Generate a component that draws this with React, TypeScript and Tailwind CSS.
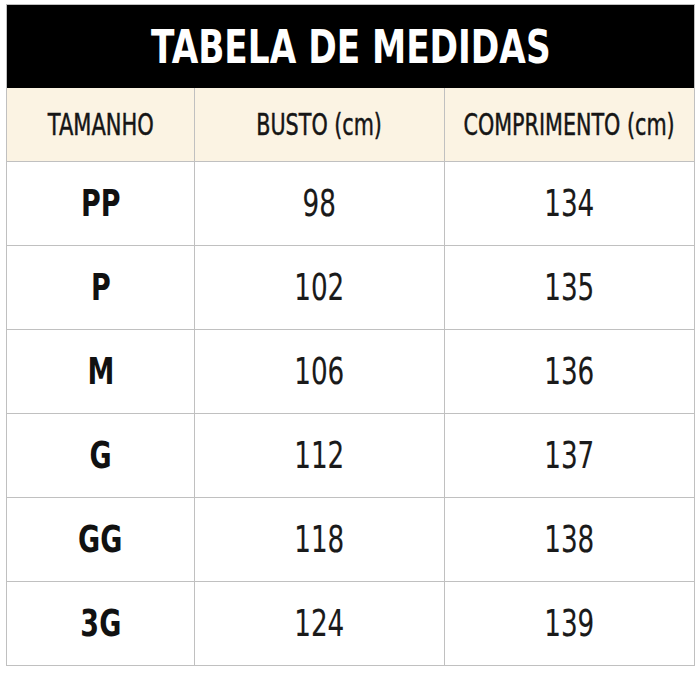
import React from "react";

const rows = [
  ["PP", "98", "134"],
  ["P", "102", "135"],
  ["M", "106", "136"],
  ["G", "112", "137"],
  ["GG", "118", "138"],
  ["3G", "124", "139"],
];

const font = { fontFamily: '"DejaVu Sans", "Liberation Sans", sans-serif' };
const cols = "grid grid-cols-[188px_250px_minmax(0,1fr)]";

export default function App() {
  return (
    <div className="w-[700px] h-[700px] bg-white pt-[4px] pl-[6px]" style={font}>
      <div className="w-[689px] border border-[#c0c0c0]">
        <div className="h-[83px] bg-black flex items-center justify-center overflow-hidden">
          <span className="inline-block shrink-0 scale-x-[0.73] text-white font-bold text-[47px] leading-none whitespace-nowrap">TABELA DE MEDIDAS</span>
        </div>
        <div className={`${cols} bg-[#fbf3e3] h-[74px] border-b border-[#c0c0c0]`}>
          <div className="min-w-0 flex items-center justify-center border-r border-[#c0c0c0] text-[30px] text-[#151515] [-webkit-text-stroke:0.5px_#151515]">
            <span className="inline-block shrink-0 scale-x-[0.7] whitespace-nowrap">TAMANHO</span>
          </div>
          <div className="min-w-0 flex items-center justify-center border-r border-[#c0c0c0] text-[30px] text-[#151515] [-webkit-text-stroke:0.5px_#151515]">
            <span className="inline-block shrink-0 scale-x-[0.69] whitespace-nowrap">BUSTO (cm)</span>
          </div>
          <div className="min-w-0 flex items-center justify-center text-[30px] text-[#151515] [-webkit-text-stroke:0.5px_#151515]">
            <span className="inline-block shrink-0 scale-x-[0.69] whitespace-nowrap">COMPRIMENTO (cm)</span>
          </div>
        </div>
        {rows.map((r, i) => (
          <div key={r[0]} className={`${cols} ${i < rows.length - 1 ? "h-[84px] border-b border-[#c0c0c0]" : "h-[83px]"}`}>
            <div className="min-w-0 flex items-center justify-center border-r border-[#c0c0c0] text-[38px] font-bold text-[#111]">
              <span className="inline-block scale-x-[0.71]">{r[0]}</span>
            </div>
            <div className="min-w-0 flex items-center justify-center border-r border-[#c0c0c0] text-[38px] text-[#1a1a1a] [-webkit-text-stroke:0.15px_#1a1a1a]">
              <span className="inline-block scale-x-[0.69]">{r[1]}</span>
            </div>
            <div className="min-w-0 flex items-center justify-center text-[38px] text-[#1a1a1a] [-webkit-text-stroke:0.15px_#1a1a1a]">
              <span className="inline-block scale-x-[0.69]">{r[2]}</span>
            </div>
          </div>
        ))}
      </div>
    </div>
  );
}
